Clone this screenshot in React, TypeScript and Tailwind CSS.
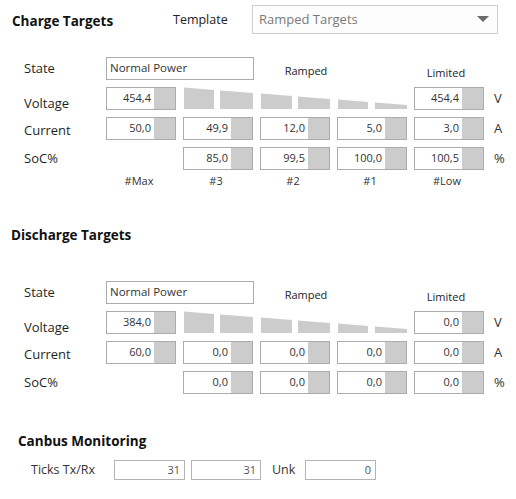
import React from "react";

type Num = string | null;

const FONT = "font-['Open_Sans','Noto_Sans',sans-serif]";

function ValueBox({ value }: { value: string }) {
  return (
    <div className="w-[70px] h-[23px] border border-[#ababab] bg-white flex shrink-0">
      <div className="flex-1 text-right pr-[3px] text-[11px] leading-[20px] text-[#333]">{value}</div>
      <div className="w-[21px] bg-[#cccccc]" />
    </div>
  );
}

function Blank() {
  return <div className="w-[70px] h-[23px] shrink-0" />;
}

function RowLabel({ text, offset = "" }: { text: string; offset?: string }) {
  return (
    <div className={`w-[106px] shrink-0 pl-[24px] text-[13px] text-[#1f1f1f] leading-[23px] ${offset}`}>
      {text}
    </div>
  );
}

function Unit({ text }: { text: string }) {
  return <div className="ml-[10px] text-[13px] leading-[23px] text-[#333]">{text}</div>;
}

// descending ramp drawn as six slanted bars between the first and last boxes
function Ramp() {
  const bars: [number, number][] = [
    [1, 31],
    [37, 70],
    [78, 109],
    [115, 147],
    [155, 185],
    [192, 224],
  ];
  const top = (x: number) => 0.5 + (x / 224) * 17.5;
  return (
    <svg width="224" height="23" viewBox="0 0 224 23" className="shrink-0">
      {bars.map(([a, b], i) => (
        <polygon key={i} points={`${a},${top(a)} ${b},${top(b)} ${b},22 ${a},22`} fill="#cccccc" />
      ))}
    </svg>
  );
}

function TargetBlock({
  voltage,
  voltageLimited,
  current,
  soc,
}: {
  voltage: string;
  voltageLimited: string;
  current: string[];
  soc: Num[];
}) {
  return (
    <>
      <div className="flex h-[23px]">
        <RowLabel text="State" />
        <div className="w-[148px] h-[23px] border border-[#ababab] bg-white text-[11.5px] leading-[20px] pl-[3px] text-[#333]">
          Normal Power
        </div>
        <div className="w-[104px] text-center text-[11px] text-[#222] pt-[6px]">Ramped</div>
        <div className="ml-[56px] w-[64px] text-center text-[11px] text-[#222] pt-[8px]">Limited</div>
      </div>
      <div className="flex h-[23px] mt-[7px] items-start">
        <RowLabel text="Voltage" offset="pt-[5px]" />
        <div className="flex gap-[7px]">
          <ValueBox value={voltage} />
          <Ramp />
          <ValueBox value={voltageLimited} />
        </div>
        <Unit text="V" />
      </div>
      <div className="flex h-[23px] mt-[7px] items-start">
        <RowLabel text="Current" offset="pt-[2px]" />
        <div className="flex gap-[7px]">
          {current.map((v, i) => (
            <ValueBox key={i} value={v} />
          ))}
        </div>
        <Unit text="A" />
      </div>
      <div className="flex h-[23px] mt-[7px] items-start">
        <RowLabel text="SoC%" />
        <div className="flex gap-[7px]">
          {soc.map((v, i) => (v === null ? <Blank key={i} /> : <ValueBox key={i} value={v} />))}
        </div>
        <Unit text="%" />
      </div>
    </>
  );
}

export default function App() {
  return (
    <div className={`w-[516px] h-[499px] bg-white flex flex-col ${FONT}`}>
      {/* Charge header with template picker */}
      <div className="flex items-center h-[29px] mt-[5px]">
        <div className="w-[173px] pl-[12px] pt-[3px] font-bold text-[13.5px] text-[#111]">Charge Targets</div>
        <div className="w-[79px] pt-[2px] text-[12.5px] text-[#222]">Template</div>
        <div className="w-[246px] h-[29px] border border-[#cfcfcf] bg-[#fdfdfd] flex items-center pl-[6px] pr-[8px]">
          <span className="flex-1 text-[13px] text-[#7a7a7a]">Ramped Targets</span>
          <svg width="12" height="7" viewBox="0 0 12 7">
            <polygon points="0,0 12,0 6,6" fill="#6b6b6b" />
          </svg>
        </div>
      </div>

      <div className="mt-[23px]" />
      <TargetBlock
        voltage="454,4"
        voltageLimited="454,4"
        current={["50,0", "49,9", "12,0", "5,0", "3,0"]}
        soc={[null, "85,0", "99,5", "100,0", "100,5"]}
      />
      <div className="flex mt-[4px] h-[14px] pl-[106px] gap-[7px] text-[11px] leading-[14px] text-[#333]">
        {["#Max", "#3", "#2", "#1", "#Low"].map((t) => (
          <div key={t} className="w-[70px] text-center pr-[4px]">
            {t}
          </div>
        ))}
      </div>

      {/* Discharge */}
      <div className="mt-[37px] h-[20px] pl-[11px] font-bold text-[13.5px] leading-[20px] text-[#111]">
        Discharge Targets
      </div>
      <div className="mt-[36px]" />
      <TargetBlock
        voltage="384,0"
        voltageLimited="0,0"
        current={["60,0", "0,0", "0,0", "0,0", "0,0"]}
        soc={[null, "0,0", "0,0", "0,0", "0,0"]}
      />

      {/* Canbus */}
      <div className="mt-[37px] h-[20px] pl-[18px] font-bold text-[13.5px] leading-[20px] text-[#111]">
        Canbus Monitoring
      </div>
      <div className="flex items-center mt-[9px] h-[20px]">
        <div className="w-[114px] pl-[31px] text-[12.5px] text-[#333]">Ticks Tx/Rx</div>
        <div className="w-[71px] h-[20px] border border-[#b4b4b4] text-right pr-[4px] text-[11px] leading-[18px] text-[#555]">31</div>
        <div className="ml-[6px] w-[70px] h-[20px] border border-[#b4b4b4] text-right pr-[4px] text-[11px] leading-[18px] text-[#555]">31</div>
        <div className="w-[44px] pl-[11px] text-[12.5px] text-[#333]">Unk</div>
        <div className="w-[71px] h-[20px] border border-[#b4b4b4] text-right pr-[4px] text-[11px] leading-[18px] text-[#555]">0</div>
      </div>
    </div>
  );
}
